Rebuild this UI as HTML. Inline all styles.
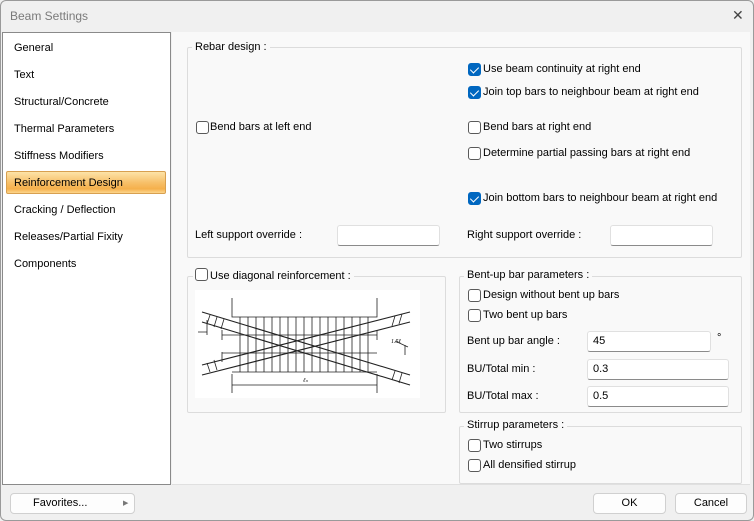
<!DOCTYPE html>
<html><head><style>
*{margin:0;padding:0;box-sizing:border-box}
body{width:754px;height:521px;background:#f0f0f0;font-family:"Liberation Sans",sans-serif;font-size:11px;color:#000;position:relative;overflow:hidden}
.a{position:absolute;line-height:14px;white-space:nowrap}
.cb{position:absolute;width:13px;height:13px;border:1px solid #5a5a5a;border-radius:3px;background:#fff}
.cb.on{background:#0067c0;border-color:#0067c0}
.cb.on:after{content:"";position:absolute;left:3px;top:1px;width:4px;height:7px;border:solid #fff;border-width:0 1.5px 1.5px 0;transform:rotate(45deg)}
.grp{position:absolute;border:1px solid #dcdcdc;border-radius:2px}
.leg{position:absolute;background:#f9f9f9;padding:0 3px;line-height:14px;white-space:nowrap}
.in{position:absolute;background:#fff;border:1px solid #e0e0e0;border-bottom:1px solid #8a8a8a;border-radius:3px;padding-left:5px;line-height:18px}
.btn{position:absolute;background:#fdfdfd;border:1px solid #d0d0d0;border-radius:4px;text-align:center;line-height:19px}
</style></head><body>
<div style="position:absolute;left:0;top:0;width:754px;height:521px;border:1px solid #9a9a9a;border-radius:6px"></div>
<div class="a" style="left:10px;top:9px;color:#7a7a7a;font-size:12px">Beam Settings</div>
<div class="a" style="left:732px;top:8px;font-size:14px;color:#444">✕</div>
<div style="position:absolute;left:2px;top:32px;width:169px;height:453px;background:#fff;border:1px solid #8a8a8a"></div>
<div class="a" style="left:14px;top:41px">General</div>
<div class="a" style="left:14px;top:68px">Text</div>
<div class="a" style="left:14px;top:95px">Structural/Concrete</div>
<div class="a" style="left:14px;top:122px">Thermal Parameters</div>
<div class="a" style="left:14px;top:149px">Stiffness Modifiers</div>
<div style="position:absolute;left:6px;top:171px;width:160px;height:23px;border:1px solid #d8a050;border-radius:2px;background:linear-gradient(#fde3a8,#f7c06a 50%,#f5b04c 80%,#fcd58c)"></div>
<div class="a" style="left:14px;top:176px">Reinforcement Design</div>
<div class="a" style="left:14px;top:203px">Cracking / Deflection</div>
<div class="a" style="left:14px;top:230px">Releases/Partial Fixity</div>
<div class="a" style="left:14px;top:257px">Components</div>
<div style="position:absolute;left:172px;top:32px;width:578px;height:453px;background:#f9f9f9;border-bottom:1px solid #e0e0e0"></div>

<div class="grp" style="left:187px;top:47px;width:555px;height:211px"></div>
<div class="leg" style="left:192px;top:40px">Rebar design :</div>
<div class="cb on" style="left:468px;top:63px"></div><div class="a" style="left:483px;top:62px">Use beam continuity at right end</div>
<div class="cb on" style="left:468px;top:86px"></div><div class="a" style="left:483px;top:85px">Join top bars to neighbour beam at right end</div>
<div class="cb" style="left:196px;top:121px"></div><div class="a" style="left:210px;top:120px">Bend bars at left end</div>
<div class="cb" style="left:468px;top:121px"></div><div class="a" style="left:483px;top:120px">Bend bars at right end</div>
<div class="cb" style="left:468px;top:147px"></div><div class="a" style="left:483px;top:146px">Determine partial passing bars at right end</div>
<div class="cb on" style="left:468px;top:192px"></div><div class="a" style="left:483px;top:191px">Join bottom bars to neighbour beam at right end</div>
<div class="a" style="left:195px;top:228px">Left support override :</div>
<div class="in" style="left:337px;top:225px;width:103px;height:21px"></div>
<div class="a" style="left:467px;top:228px">Right support override :</div>
<div class="in" style="left:610px;top:225px;width:103px;height:21px"></div>

<div class="grp" style="left:187px;top:276px;width:259px;height:137px"></div>
<div class="leg" style="left:193px;top:268px;padding-left:2px"><span class="cb" style="position:relative;display:inline-block;vertical-align:-2px;margin-right:2px"></span>Use diagonal reinforcement :</div>
<svg style="position:absolute;left:195px;top:290px" width="225" height="108" viewBox="0 0 225 108">
<rect width="225" height="108" fill="#fff"/>
<g stroke="#222" fill="none" stroke-width="0.8">
<path d="M37 8V27H182V8"/>
<path d="M27 40V50M27 62V72M182 40V50"/>
<path d="M27 45H182M27 63H182M37 82H182"/>
<path d="M7 22L215 85M7 32L215 95M7 75L215 22M7 85L215 32" stroke-width="1.1"/>
<g stroke-width="0.8">
<path d="M45 27V82M53 27V82M61 27V82M69 27V82M77 27V82M85 27V82M93 27V82M101 27V82M109 27V82M117 27V82M125 27V82M133 27V82M141 27V82M149 27V82M157 27V82M165 27V82M173 27V82"/>
<path d="M15 25L12 34M22 27L19 37M29 29L26 39M200 81L197 90M207 83L204 93M15 82L12 73M22 80L19 70M200 26L197 36M207 24L204 34"/>
</g>
<path d="M37 95H182M37 84V103M182 84V103"/>
<path d="M3 42H12M12 30V45M200 51L213 57M210 55V65"/>
</g>
<text x="108" y="92" font-size="6" font-family="Liberation Serif" font-style="italic">ℓₙ</text>
<text x="196" y="53" font-size="6" font-family="Liberation Serif" font-style="italic">1.5ℓ</text>
</svg>

<div class="grp" style="left:459px;top:276px;width:283px;height:137px"></div>
<div class="leg" style="left:464px;top:268px">Bent-up bar parameters :</div>
<div class="cb" style="left:468px;top:289px"></div><div class="a" style="left:483px;top:288px">Design without bent up bars</div>
<div class="cb" style="left:468px;top:309px"></div><div class="a" style="left:483px;top:308px">Two bent up bars</div>
<div class="a" style="left:467px;top:334px">Bent up bar angle :</div>
<div class="in" style="left:587px;top:331px;width:124px;height:21px">45</div>
<div class="a" style="left:717px;top:331px">°</div>
<div class="a" style="left:467px;top:362px">BU/Total min :</div>
<div class="in" style="left:587px;top:359px;width:142px;height:21px">0.3</div>
<div class="a" style="left:467px;top:389px">BU/Total max :</div>
<div class="in" style="left:587px;top:386px;width:142px;height:21px">0.5</div>

<div class="grp" style="left:459px;top:426px;width:283px;height:58px"></div>
<div class="leg" style="left:464px;top:418px">Stirrup parameters :</div>
<div class="cb" style="left:468px;top:439px"></div><div class="a" style="left:483px;top:438px">Two stirrups</div>
<div class="cb" style="left:468px;top:459px"></div><div class="a" style="left:483px;top:458px">All densified stirrup</div>

<div class="btn" style="left:10px;top:493px;width:125px;height:21px;text-align:left;padding-left:22px">Favorites...<span style="position:absolute;left:112px;top:0;font-size:7px;color:#777">▶</span></div>
<div class="btn" style="left:593px;top:493px;width:73px;height:21px">OK</div>
<div class="btn" style="left:675px;top:493px;width:72px;height:21px">Cancel</div>
</body></html>
